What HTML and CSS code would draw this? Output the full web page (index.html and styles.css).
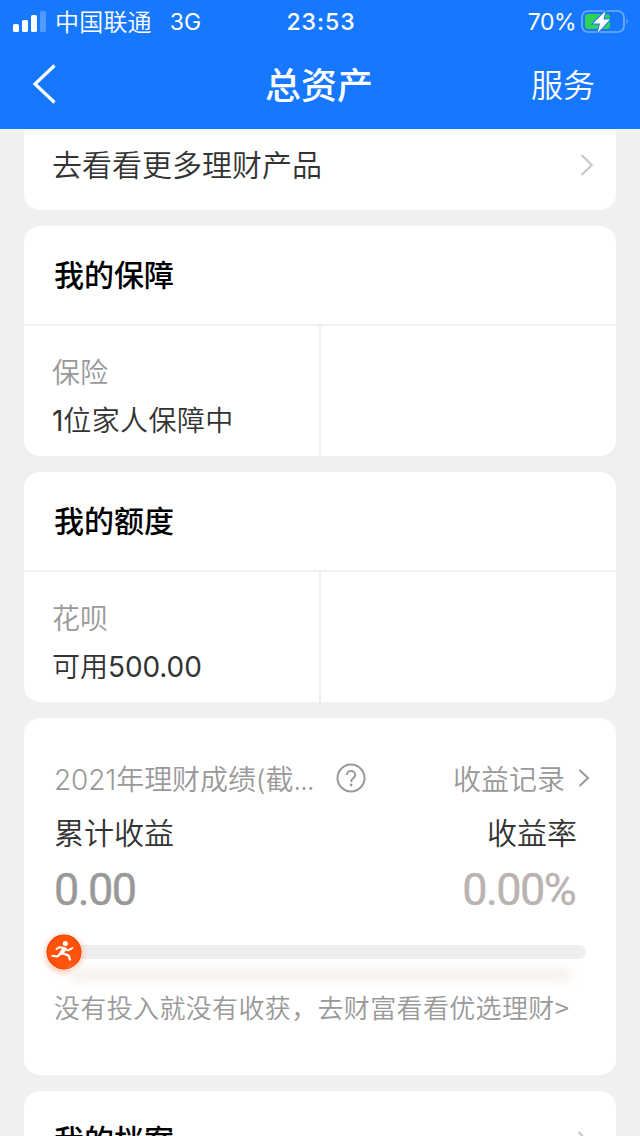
FILE: index.html
```html
<!DOCTYPE html>
<html lang="zh-CN">
<head>
    <meta charset="UTF-8">
    <meta name="viewport" content="width=device-width, initial-scale=1.0">
    <title>总资产</title>
    <link rel="stylesheet" href="styles.css">
</head>
<body>
    <header class="header">
        <div class="status-bar">
            <div class="status-left">
                <svg class="signal" width="33" height="22" viewBox="0 0 33 22" fill="#fff">
                    <rect x="0" y="13" width="6" height="8" rx="1.6"/>
                    <rect x="9" y="9" width="6" height="12" rx="1.6"/>
                    <rect x="18" y="4" width="6" height="17" rx="1.6"/>
                    <rect x="27" y="0" width="6" height="21" rx="1.6" opacity=".25"/>
                </svg>
                <span class="carrier">中国联通</span>
                <span class="network">3G</span>
            </div>
            <span class="time">23:53</span>
            <div class="status-right">
                <span class="percent">70%</span>
                <svg class="battery" width="49" height="26" viewBox="0 0 49 26">
                    <rect x="2" y="2" width="42" height="21" rx="6" fill="none" stroke="#fff" stroke-width="1.7" opacity=".4"/>
                    <path d="M46.3 9.5q2.8 3 0 6z" fill="#fff" opacity=".4"/>
                    <rect x="5" y="5" width="25" height="15" rx="3" fill="#30d158"/>
                    <path d="M25.500 2 13 14.500H20L17.500 24 30 10.500H23.500L25.500 2z" fill="#fff" stroke="#1677ff" stroke-width="2" paint-order="stroke"/>
                </svg>
            </div>
        </div>
        <nav class="nav">
            <svg class="back" width="24" height="40" viewBox="0 0 24 40" fill="none" stroke="#fff" stroke-width="3.200">
                <path d="M22.500 1.500 3 20 22.500 38.500"/>
            </svg>
            <h1>总资产</h1>
            <span class="service">服务</span>
        </nav>
    </header>

    <main class="content">
        <section class="card more">
            <span>去看看更多理财产品</span>
            <svg width="14" height="22" viewBox="0 0 14 22" fill="none" stroke="#c8c8cc" stroke-width="2.200">
                <path d="M1.500 1 11.800 11 1.500 21"/>
            </svg>
        </section>

        <section class="card">
            <h2>我的保障</h2>
            <div class="grid">
                <div class="cell">
                    <p class="label">保险</p>
                    <p class="value family"><span class="num">1</span>位家人保障中</p>
                </div>
                <div class="cell"></div>
            </div>
        </section>

        <section class="card">
            <h2>我的额度</h2>
            <div class="grid">
                <div class="cell">
                    <p class="label">花呗</p>
                    <p class="value">可用<span class="num">500.00</span></p>
                </div>
                <div class="cell"></div>
            </div>
        </section>

        <section class="card score">
            <div class="row score-head">
                <span class="year">2021年理财成绩(截<span class="dots">...</span></span>
                <svg class="help" width="30" height="30" viewBox="0 0 30 30" fill="none" stroke="#999" stroke-width="2">
                    <circle cx="15" cy="15" r="13.500"/>
                    <path d="M10.800 12c0-5.300 8.400-5.300 8.400 0 0 3-4.100 3.300-4.100 7"/>
                    <circle cx="15.100" cy="22" r="1.400" fill="#999" stroke="none"/>
                </svg>
                <span class="record">收益记录</span>
                <svg width="12" height="18" viewBox="0 0 12 18" fill="none" stroke="#999" stroke-width="2">
                    <path d="M1.500 1 10 9 1.500 17"/>
                </svg>
            </div>
            <div class="row names">
                <span>累计收益</span>
                <span>收益率</span>
            </div>
            <div class="row numbers">
                <span>0.00</span>
                <span class="rate">0.00%</span>
            </div>
            <div class="progress">
                <svg class="runner" width="36" height="36" viewBox="0 0 36 36">
                    <circle cx="18" cy="18" r="17.500" fill="#ff520a"/>
                    <circle cx="18" cy="18" r="16.700" fill="none" stroke="#f24a0b" stroke-width="1.300"/>
                    <circle cx="19.300" cy="9.600" r="2.500" fill="#fff"/>
                    <g fill="none" stroke="#fff" stroke-linecap="round" stroke-linejoin="round">
                        <path d="M10.500 15 13.500 13.200 18 14 22 16.500 26.500 14" stroke-width="2"/>
                        <path d="M18.500 15 15.500 18.800" stroke-width="4"/>
                        <path d="M15 19 11.500 22.500 6.500 21.800" stroke-width="2.200"/>
                        <path d="M16 19.200 22.500 21.500 24 25.500" stroke-width="2.300"/>
                    </g>
                </svg>
            </div>
            <p class="tip">没有投入就没有收获，去财富看看优选理财<span class="more-sign">&gt;</span></p>
        </section>

        <section class="card archive">
            <h2>我的档案</h2>
            <svg width="14" height="22" viewBox="0 0 14 22" fill="none" stroke="#c8c8cc" stroke-width="2.200">
                <path d="M1.500 1 11.800 11 1.500 21"/>
            </svg>
        </section>
    </main>
</body>
</html>
```
FILE: styles.css
```css
* {
    box-sizing: border-box;
}
body {
    margin: 0;
    width: 640px;
    height: 1136px;
    overflow: hidden;
    background: #f0f0f0;
    color: #333;
    font-family: Inter, "Noto Sans CJK SC", sans-serif;
    font-weight: 350;
    white-space: nowrap;
}
h1, h2, p {
    margin: 0;
}
svg {
    display: block;
    flex: none;
}
.header {
    height: 129px;
    background: #1677ff;
    color: #fff;
}
.status-bar, .nav {
    display: grid;
    grid-template-columns: 1fr auto 1fr;
    align-items: center;
}
.status-bar {
    height: 40px;
    padding: 0 11px 0 13px;
}
.status-left, .status-right {
    display: flex;
    align-items: center;
    line-height: 40px;
}
.status-right {
    justify-content: flex-end;
}
.carrier {
    margin-left: 9px;
    padding-top: 3px;
    font-size: 24px;
    letter-spacing: 0.2px;
}
.network {
    margin-left: 18px;
    padding-top: 1px;
    font-size: 23px;
    font-weight: 400;
}
.time {
    padding-top: 1px;
    font-size: 23px;
    font-weight: 500;
    letter-spacing: 1px;
}
.percent {
    margin-right: 4px;
    padding-top: 1px;
    font-size: 23px;
    font-weight: 400;
    letter-spacing: -0.5px;
}
.battery {
    margin-top: 1px;
}
.nav {
    height: 89px;
    padding: 0 45px 0 32px;
}
.nav h1 {
    padding: 0 0 4px 11px;
    font-size: 36px;
    font-weight: 500;
}
.service {
    justify-self: end;
    padding-bottom: 4px;
    font-size: 32px;
}
.back {
    margin-top: -1px;
}
.content {
    display: flex;
    flex-direction: column;
    gap: 16px;
    padding: 0 24px;
}
.card {
    flex: none;
    border-radius: 16px;
    background: #fff;
}
.more {
    display: flex;
    justify-content: space-between;
    height: 81px;
    padding: 14px 22px 0 28px;
    border-radius: 0 0 16px 16px;
    font-size: 30px;
    line-height: 44px;
}
.more svg {
    margin-top: 11px;
}
.card h2 {
    height: 98px;
    padding-left: 30px;
    color: #000;
    font-size: 30px;
    font-weight: 500;
    line-height: 98px;
}
.grid {
    display: grid;
    grid-template-columns: 297px 1fr;
    height: 132px;
    border-top: 2px solid #eeeff0;
}
.cell {
    padding: 23px 0 0 28px;
    font-size: 28px;
    line-height: 48px;
}
.cell:first-child {
    border-right: 2px solid #eeeff0;
}
.label {
    color: #999;
}
.family {
    letter-spacing: 0.4px;
}
.num {
    font-weight: 400;
    letter-spacing: -0.1px;
}
.score {
    height: 357px;
    padding: 38px 30px 0;
}
.row {
    display: flex;
    align-items: center;
}
.score-head {
    height: 43px;
    margin-right: -4px;
    color: #999;
    font-size: 28px;
}
.year {
    width: 260px;
    letter-spacing: -0.1px;
}
.dots {
    letter-spacing: -1.2px;
}
.help {
    margin-left: 22px;
}
.record {
    margin: 0 13px 0 auto;
}
.names {
    justify-content: space-between;
    height: 64px;
    padding-right: 9px;
    font-size: 30px;
}
.numbers {
    justify-content: space-between;
    height: 52px;
    padding-right: 11px;
    color: #999;
    font-family: Roboto, sans-serif;
    font-size: 45px;
    font-weight: 400;
    letter-spacing: -1.6px;
    -webkit-text-stroke: 0.4px;
}
.rate {
    color: #bbb3b1;
}
.progress {
    position: relative;
    display: flex;
    align-items: center;
    width: 540px;
    height: 14px;
    margin: 30px 0 0 -8px;
    border-radius: 7px;
    background: #efeeef;
}
/* soft glow under the track */
.progress::after {
    content: "";
    position: absolute;
    top: 23px;
    left: 24px;
    right: 14px;
    height: 14px;
    border-radius: 7px;
    background: #f8f2ee;
    filter: blur(4px);
}
.runner {
    border-radius: 50%;
    box-shadow: 0 2px 6px rgba(255, 82, 10, 0.4);
}
.tip {
    position: relative;
    margin-top: 28px;
    color: #999;
    font-size: 26px;
    letter-spacing: 0.35px;
    line-height: 40px;
}
.more-sign {
    font-family: "Noto Sans CJK SC", sans-serif;
}
.archive {
    display: flex;
    justify-content: space-between;
    padding-right: 25px;
}
.archive svg {
    margin-top: 40px;
}
```
